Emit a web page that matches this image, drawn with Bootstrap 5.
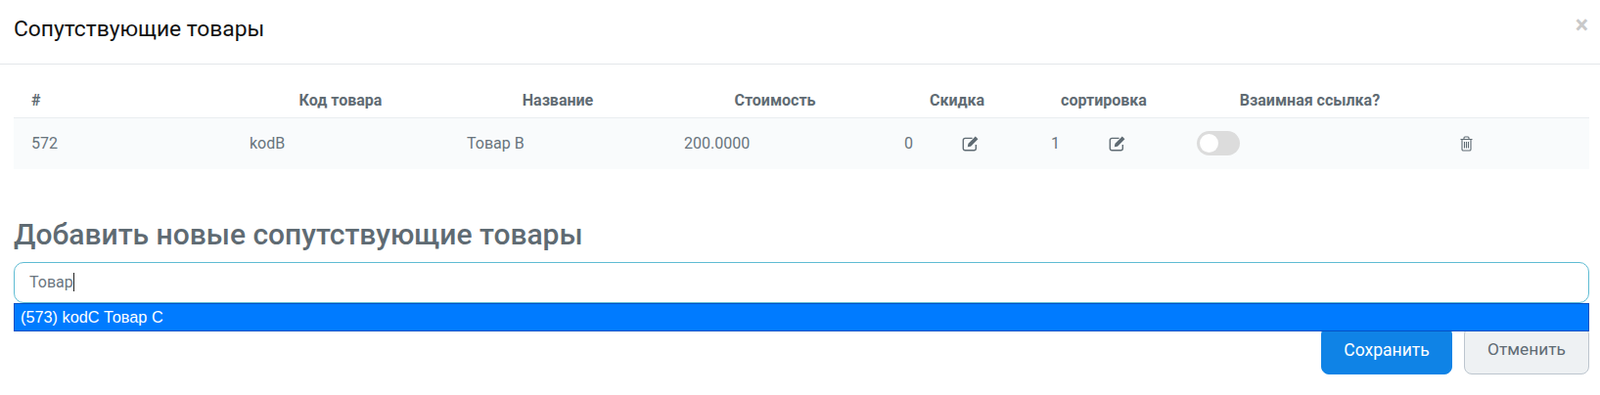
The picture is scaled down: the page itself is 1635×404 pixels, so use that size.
<!DOCTYPE html>
<html lang="ru">
<head>
    <meta charset="UTF-8">
    <meta name="viewport" content="width=device-width, initial-scale=1.0">
    <title>Сопутствующие товары</title>
    <link href="https://cdn.jsdelivr.net/npm/bootstrap@5.3.0/dist/css/bootstrap.min.css" rel="stylesheet">
    <style>
        body {
            font-family: Roboto, "Liberation Sans", sans-serif;
            font-size: 16px;
            color: #68747c;
            background: #fff;
        }

        .dlg-head {
            height: 66px;
            padding: 0 12px 6px 14px;
            border-bottom: 1px solid #e4e7ea;
        }

        .dlg-title {
            font-size: 22.8px;
            font-weight: 400;
            color: #111;
            margin: 0;
        }

        .dlg-close {
            font-size: 25px;
            font-weight: 700;
            line-height: 1;
            color: #c9c9c9;
            margin-bottom: 9px;
        }

        .dlg-body {
            padding: 27px 11px 0 14px;
        }

        .goods-table {
            table-layout: fixed;
            width: 100%;
            margin: 0;
        }

        .goods-table th {
            height: 27px;
            padding: 0 0 7px;
            font-size: 16px;
            font-weight: 700;
            line-height: 20px;
            text-align: center;
            color: #5f6b73;
            border-bottom: 1px solid #e9edf0;
        }

        .goods-table th:first-child {
            text-align: left;
            padding-left: 18px;
        }

        .goods-table td {
            height: 52px;
            padding: 0 0 0 18px;
            vertical-align: middle;
            color: #68747c;
            background: #f9fbfc;
            border: 0;
        }

        .goods-table td.cell-shift {
            padding-left: 21px;
        }

        .num-val {
            width: 59px;
        }

        .switch-off {
            width: 44px;
            height: 25px;
            padding: 0 3px;
            margin-left: -1px;
            background: #dcdcdc;
            border-radius: 13px;
        }

        .switch-knob {
            width: 19px;
            height: 19px;
            background: #fff;
            border-radius: 50%;
        }

        .add-title {
            margin: 48px 0 0;
            font-size: 30px;
            font-weight: 500;
            line-height: 38px;
            color: #5f6b73;
        }

        .search-wrap {
            margin-top: 9px;
        }

        .search-box {
            height: 42px;
            padding: 0 15px;
            font-size: 16px;
            color: #6b7680;
            border: 1px solid #5fbcd3;
            border-radius: 10px;
        }

        .search-caret {
            width: 1px;
            height: 19px;
            background: #222;
        }

        .suggest-item {
            position: absolute;
            top: 100%;
            left: 0;
            right: 0;
            z-index: 5;
            height: 29px;
            padding-left: 6px;
            font-family: "Liberation Sans", sans-serif;
            font-size: 16.3px;
            line-height: 27px;
            color: #fff;
            background: #007bff;
            border: 1px solid #0451c4;
        }

        .dlg-actions {
            margin-top: 24px;
            gap: 12px;
        }

        .btn-save,
        .btn-cancel {
            height: 49px;
            font-size: 17.3px;
            border-radius: 8px;
        }

        .btn-save {
            width: 134px;
            font-size: 17.5px;
            color: #fff;
            background: #0f83e6;
            border: 1px solid #0f83e6;
        }

        .btn-cancel {
            width: 128px;
            color: #5f6b73;
            background: #eef1f3;
            border: 1px solid #bcc5ce;
        }
    </style>
</head>
<body>
    <div class="dlg-head d-flex align-items-center justify-content-between">
        <h5 class="dlg-title">Сопутствующие товары</h5>
        <span class="dlg-close">×</span>
    </div>

    <div class="dlg-body">
        <table class="goods-table">
            <colgroup>
                <col style="width: 223px">
                <col style="width: 222px">
                <col style="width: 222px">
                <col style="width: 222px">
                <col style="width: 150px">
                <col style="width: 150px">
                <col style="width: 271px">
                <col>
            </colgroup>
            <thead>
                <tr>
                    <th>#</th>
                    <th>Код товара</th>
                    <th>Название</th>
                    <th>Стоимость</th>
                    <th>Скидка</th>
                    <th>сортировка</th>
                    <th>Взаимная ссылка?</th>
                    <th></th>
                </tr>
            </thead>
            <tbody>
                <tr>
                    <td>572</td>
                    <td>kodB</td>
                    <td>Товар B</td>
                    <td>200.0000</td>
                    <td class="cell-shift">
                        <div class="d-flex align-items-center">
                            <span class="num-val">0</span>
                            <svg class="d-block" width="18" height="17" viewBox="0 0 17 16" fill="none">
                                <path d="M13.500 9.500V13a1.800 1.800 0 0 1-1.800 1.800H3A1.800 1.800 0 0 1 1.200 13V5A1.800 1.800 0 0 1 3 3.200h7" stroke="#5f6b73" stroke-width="1.300"/>
                                <path d="M6 8.500 13 1.500l2.500 2.500-7 7-3 .6z" fill="#5f6b73"/>
                            </svg>
                        </div>
                    </td>
                    <td class="cell-shift">
                        <div class="d-flex align-items-center">
                            <span class="num-val">1</span>
                            <svg class="d-block" width="18" height="17" viewBox="0 0 17 16" fill="none">
                                <path d="M13.500 9.500V13a1.800 1.800 0 0 1-1.800 1.800H3A1.800 1.800 0 0 1 1.200 13V5A1.800 1.800 0 0 1 3 3.200h7" stroke="#5f6b73" stroke-width="1.300"/>
                                <path d="M6 8.500 13 1.500l2.500 2.500-7 7-3 .6z" fill="#5f6b73"/>
                            </svg>
                        </div>
                    </td>
                    <td class="cell-shift">
                        <div class="switch-off d-flex align-items-center">
                            <span class="switch-knob"></span>
                        </div>
                    </td>
                    <td>
                        <svg class="d-block" width="13" height="16" viewBox="0 0 13 16" fill="none" stroke="#5f6b73" stroke-width="1.100">
                            <path d="M.5 3.500h12M4 3.500V2a1 1 0 0 1 1-1h3a1 1 0 0 1 1 1v1.500"/>
                            <path d="M2 3.500v10.200A1.300 1.300 0 0 0 3.300 15h6.400a1.300 1.300 0 0 0 1.300-1.300V3.500"/>
                            <path d="M4.500 6v6.500M6.500 6v6.500M8.500 6v6.500"/>
                        </svg>
                    </td>
                </tr>
            </tbody>
        </table>

        <h3 class="add-title">Добавить новые сопутствующие товары</h3>

        <div class="search-wrap position-relative">
            <div class="search-box d-flex align-items-center"><span>Товар</span><span class="search-caret"></span></div>
            <div class="suggest-item">(573) kodC Товар C</div>
        </div>

        <div class="dlg-actions d-flex justify-content-end">
            <button type="button" class="btn btn-save">Сохранить</button>
            <button type="button" class="btn btn-cancel">Отменить</button>
        </div>
    </div>

    <script src="https://cdn.jsdelivr.net/npm/bootstrap@5.3.0/dist/js/bootstrap.bundle.min.js"></script>
</body>
</html>
